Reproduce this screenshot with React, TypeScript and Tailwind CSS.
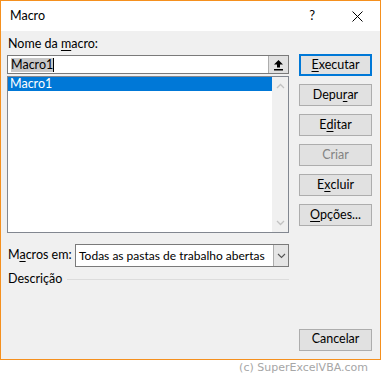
const font = { fontFamily: 'Lato, "Noto Sans", sans-serif' };

function Btn({ children, primary, disabled }: { children: React.ReactNode; primary?: boolean; disabled?: boolean }) {
  return (
    <div
      className={
        'h-[22px] w-[73px] flex items-center justify-center bg-[#e1e1e1] text-[12.5px] leading-none ' +
        (primary ? 'border-2 border-[#0078d7] ' : 'border border-[#adadad] ') +
        (disabled ? 'text-[#838383]' : 'text-black')
      }
    >
      {children}
    </div>
  );
}

function Chevron({ up }: { up?: boolean }) {
  return (
    <svg width="9" height="6" viewBox="0 0 9 6">
      <path d={up ? 'M1 5 L4.5 1.5 L8 5' : 'M1 1 L4.5 4.5 L8 1'} fill="none" stroke="#c2c2c2" strokeWidth="1.3" />
    </svg>
  );
}

export default function App() {
  return (
    <div className="w-[381px] h-[376px] bg-white flex flex-col" style={font}>
      <div className="w-[381px] h-[363px] border border-[#f5901e] flex flex-col">
        <div className="h-[30px] bg-white flex items-center pl-[9px] shrink-0">
          <span className="text-[12.5px] text-black pt-[1px]">Macro</span>
          <span className="ml-auto text-[13px] text-black mr-[37px]">?</span>
          <svg width="11" height="11" viewBox="0 0 11 11" className="mr-[17px]">
            <path d="M0.5 0.5 L10.5 10.5 M10.5 0.5 L0.5 10.5" stroke="#000" strokeWidth="1" />
          </svg>
        </div>
        <div className="flex-1 bg-[#f0f0f0] flex pl-[6px] pt-[5px] pb-[8px] gap-[10px] text-[12.5px]">
          <div className="w-[282px] flex flex-col">
            <div className="h-[16px] text-black flex items-center pl-[1px]">
              Nome da&nbsp;<span className="underline underline-offset-2">m</span>acro:
            </div>
            <div className="mt-[3px] h-[19px] flex border border-[#7a7a7a] bg-white">
              <div className="flex-1 flex items-center pl-[3px]">
                <span className="bg-[#c8c8c8] leading-[14px] text-black">Macro1</span>
                <span className="w-[1px] h-[14px] bg-black" />
              </div>
              <div className="w-[20px] bg-[#e1e1e1] border-l border-[#adadad] flex items-center justify-center">
                <svg width="11" height="12" viewBox="0 0 11 12">
                  <path d="M5.5 1 L10 5.5 L7 5.5 L7 8.5 L4 8.5 L4 5.5 L1 5.5 Z" fill="#000" />
                  <rect x="1" y="10" width="9" height="1.5" fill="#000" />
                </svg>
              </div>
            </div>
            <div className="mt-[2px] h-[157px] border border-[#828790] bg-white flex">
              <div className="flex-1">
                <div className="h-[14px] bg-[#0078d7] text-white leading-[14px] pl-[2px]">Macro1</div>
              </div>
              <div className="w-[16px] bg-[#f0f0f0] flex flex-col items-center justify-between py-[6px]">
                <Chevron up />
                <Chevron />
              </div>
            </div>
            <div className="mt-[11px] flex items-center h-[23px]">
              <div className="w-[68px] text-black pl-[1px] whitespace-nowrap">
                M<span className="underline underline-offset-2">a</span>cros em:
              </div>
              <div className="flex-1 h-[23px] border border-[#7a7a7a] bg-white flex">
                <div className="flex-1 flex items-center pl-[3px] text-black whitespace-nowrap text-[12px]">
                  Todas as pastas de trabalho abertas
                </div>
                <div className="w-[15px] bg-[#e5e5e5] border-l border-[#adadad] flex items-center justify-center">
                  <svg width="9" height="6" viewBox="0 0 9 6">
                    <path d="M1 1 L4.5 4.5 L8 1" fill="none" stroke="#555" strokeWidth="1.1" />
                  </svg>
                </div>
              </div>
            </div>
            <div className="mt-[4px] flex items-center h-[16px]">
              <span className="text-black pl-[1px]">Descrição</span>
              <div className="flex-1 ml-[5px] h-[1px] bg-[#dcdcdc]" />
            </div>
          </div>
          <div className="flex flex-col pt-[18px] gap-[8px]">
            <Btn primary>
              <span className="underline underline-offset-2">E</span>xecutar
            </Btn>
            <Btn>
              Depu<span className="underline underline-offset-2">r</span>ar
            </Btn>
            <Btn>
              E<span className="underline underline-offset-2">d</span>itar
            </Btn>
            <Btn disabled>Criar</Btn>
            <Btn>
              E<span className="underline underline-offset-2">x</span>cluir
            </Btn>
            <Btn>
              <span className="underline underline-offset-2">O</span>pções...
            </Btn>
            <div className="mt-auto">
              <Btn>Cancelar</Btn>
            </div>
          </div>
        </div>
      </div>
      <div className="flex-1 flex items-center justify-end pr-[13px]">
        <span className="text-[11px] text-[#a6a6a6]" style={{ fontFamily: '"DejaVu Sans", sans-serif' }}>
          (c) SuperExcelVBA.com
        </span>
      </div>
    </div>
  );
}
